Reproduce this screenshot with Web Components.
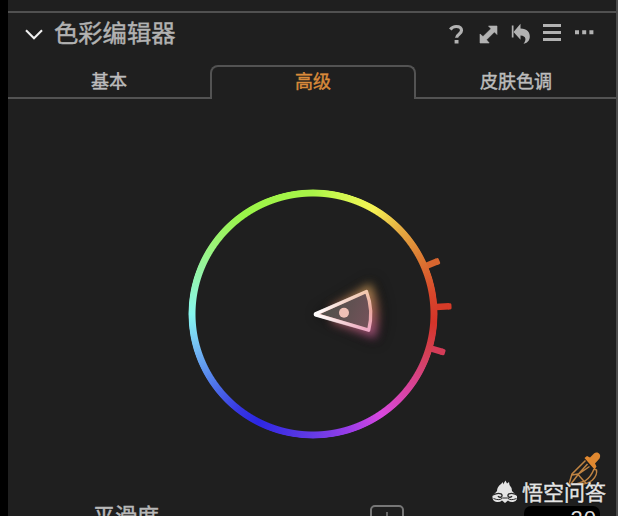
<!DOCTYPE html>
<html lang="zh-CN">
<head>
<meta charset="utf-8">
<title>色彩编辑器</title>
<style>
  html, body { margin: 0; height: 100%; background: #000; overflow: hidden; }
  body { font-family: "Liberation Sans", "Noto Sans CJK SC", sans-serif; -webkit-text-stroke: .45px currentColor; }
</style>
</head>
<body>
<color-editor>
  <tool-header slot="header">色彩编辑器</tool-header>
  <tab-strip slot="tabs">
    <tab-item>基本</tab-item>
    <tab-item active>高级</tab-item>
    <tab-item>皮肤色调</tab-item>
  </tab-strip>
  <color-wheel></color-wheel>
  <smooth-row slot="footer" value="20">平滑度</smooth-row>
  <site-mark slot="mark">悟空问答</site-mark>
</color-editor>

<script>
const define = (name, html, setup) => {
    const template = document.createElement('template');
    template.innerHTML = html;
    customElements.define(name, class extends HTMLElement {
        constructor() {
            super();
            this.attachShadow({mode: 'open'})
                .appendChild(template.content.cloneNode(true));
        }

        connectedCallback() {
            if (setup) setup(this, this.shadowRoot);
        }
    });
};

define('color-editor', `
  <style>
    :host { display: block; height: 516px; padding-left: 8px; box-sizing: border-box; overflow: hidden; position: relative; }
    .panel {
        height: 516px;
        box-sizing: border-box;
        background: #1f1f1f;
        border-right: 2px solid #4c4c4c;
        display: grid;
        grid-template-rows: 11px 54px 34px 1fr 36px;
    }
    .top { border-bottom: 2px solid #505050; box-sizing: content-box; height: 11px; }
    .mark { position: absolute; left: 491px; top: 478px; }
  </style>
  <div class="panel">
    <div class="top"></div>
    <slot name="header"></slot>
    <slot name="tabs"></slot>
    <slot></slot>
    <slot name="footer"></slot>
  </div>
  <div class="mark"><slot name="mark"></slot></div>
`);

define('tool-header', `
  <style>
    :host { display: flex; align-items: center; height: 46px; padding: 0 21px 0 16px; color: #b2b2b2; }
    .title { flex: 1; margin-left: 10px; padding-bottom: 1px; font-size: 24.3px; line-height: 36px; }
    svg { display: block; }
  </style>
  <svg width="20" height="46" viewBox="0 0 20 46" fill="none" stroke="#f0f0f0" stroke-width="2.1"><path d="M2 19.3l8 8 8-8"/></svg>
  <span class="title"><slot></slot></span>
  <svg width="150" height="46" viewBox="445 11 150 46" fill="#b2b2b2">
    <path d="M450.3 29.500c1.500-2 3.500-3 5.900-3 3.300 0 5.300 1.500 5.300 4 0 3.600-4.900 3.800-4.900 7.300" fill="none" stroke="#b2b2b2" stroke-width="3.200"/>
    <rect x="454.600" y="40" width="3.900" height="3.500"/>
    <path d="M488.500 26H497v8.500l-2.600-2.600-7.900 7.900 2.700 3.200H480v-9l3 2.600 8-7.900z" stroke="#b2b2b2" stroke-width=".6"/>
    <path d="M511.800 25.500h1.700v12h-1.700z"/>
    <path d="M513.500 32l7-8.200v4.700c6.700.2 9.500 4 9.300 8.400-.2 3.700-2.800 6.300-6.300 6.800 3-3.400 3-8-3-8.200v4.200z"/>
    <path d="M543 24h18v3h-18zM543 31h18v3h-18zM543 38h18v3h-18zM575 30.200h4v4h-4zM582.200 30.200h4v4h-4zM589.400 30.200h4v4h-4z"/>
  </svg>
`);

define('tab-strip', `
  <style>
    :host { display: grid; grid-template-columns: 202px 206px 1fr; height: 34px; }
  </style>
  <slot></slot>
`);

define('tab-item', `
  <style>
    :host {
        display: flex;
        justify-content: center;
        box-sizing: border-box;
        height: 34px;
        padding-top: 4px;
        border-bottom: 2px solid #535353;
        color: #bcbcbc;
        font-size: 18px;
        line-height: 26px;
    }
    :host([active]) {
        border: 2px solid #535353;
        border-bottom: 0;
        border-radius: 8px 8px 0 0;
        padding-top: 2px;
        color: #d98a3a;
    }
  </style>
  <slot></slot>
`);

define('color-wheel', `
  <style>
    :host { display: grid; place-content: start; padding: 75px 0 0 165px; }
    .wheel { display: grid; width: 280px; height: 280px; }
    .wheel > * { grid-area: 1 / 1; }
    .ring {
        width: 250px;
        height: 250px;
        margin: 15px;
        border-radius: 50%;
        background: conic-gradient(#a9f448 0deg, #d0f850 13deg, #f6f354 30deg, #e6af43 45deg, #dc7832 63deg, #d8472b 80deg, #d53429 94deg, #d44052 108deg, #d8439a 127deg, #d848df 146deg, #9a3de9 163deg, #653be4 180deg, #2c27e3 207deg, #3737e2 218deg, #5582ed 238deg, #78c5f5 256deg, #87f8ef 270deg, #93f5b6 286deg, #9bf476 305deg, #9af449 325deg, #a9f448 360deg);
        -webkit-mask: radial-gradient(circle, transparent 117px, #000 118px, #000 124px, transparent 125px);
        mask: radial-gradient(circle, transparent 117px, #000 118px, #000 124px, transparent 125px);
    }
    svg { display: block; overflow: visible; }
  </style>
  <div class="wheel">
    <div class="ring"></div>
    <svg width="280" height="280" viewBox="173 174 280 280">
      <defs>
        <linearGradient id="edge" gradientUnits="userSpaceOnUse" x1="350" y1="291" x2="352" y2="332">
          <stop stop-color="#f2cbb0"/><stop offset=".5" stop-color="#eba9a0"/><stop offset="1" stop-color="#efaac8"/>
        </linearGradient>
        <linearGradient id="tip" gradientUnits="userSpaceOnUse" x1="314" y1="314" x2="365" y2="314">
          <stop stop-color="#fff"/><stop offset=".2" stop-color="#fff" stop-opacity=".85"/><stop offset="1" stop-color="#fff" stop-opacity="0"/>
        </linearGradient>
        <linearGradient id="fill" gradientUnits="userSpaceOnUse" x1="335" y1="300" x2="373" y2="318">
          <stop stop-color="#54504c"/><stop offset="1" stop-color="#75525a"/>
        </linearGradient>
        <linearGradient id="glow" gradientUnits="userSpaceOnUse" x1="350" y1="288" x2="352" y2="335">
          <stop stop-color="#c79a58"/><stop offset=".5" stop-color="#bb705e"/><stop offset="1" stop-color="#b8588c"/>
        </linearGradient>
        <filter id="soft" x="-50%" y="-50%" width="200%" height="200%"><feGaussianBlur stdDeviation="5"/></filter>
        <filter id="shade" x="-50%" y="-50%" width="200%" height="200%"><feGaussianBlur stdDeviation="7"/></filter>
      </defs>
      <g fill="none" stroke-width="6.500">
        <path d="M426 266l11-4.600" stroke="#d8662f"/>
        <path d="M436 307l13-.7" stroke="#d63b28"/>
        <path d="M431 348.500l11.500 3.300" stroke="#d43c58"/>
      </g>
      <g fill="none" stroke-width="3" stroke-linejoin="round">
        <path d="M436.200 260l1.300 3.300 1.200-.5-1.400-3.200z" stroke="#d8662f"/>
        <path d="M448.500 304.800l.2 3.200 1.400-.1-.2-3.200z" stroke="#d63b28"/>
        <path d="M442.500 350.200l-1 3.200 1.600.4 1-3.200z" stroke="#d43c58"/>
      </g>
      <path d="M322 314l50-30q14 30 3 54z" fill="#000" stroke="#000" stroke-width="7" opacity=".45" filter="url(#shade)"/>
      <path d="M334 309l35-21q10 22 4 46l-38-14z" fill="url(#glow)" stroke="url(#glow)" stroke-width="7" opacity=".8" filter="url(#soft)"/>
      <path d="M315.500 314.300l51-22.800q7.200 19 2.200 38.700z" fill="url(#fill)" stroke="url(#edge)" stroke-width="3.300" stroke-linejoin="round"/>
      <path d="M368.700 330.200L315.500 314.800v-1l51-22.300" fill="none" stroke="url(#tip)" stroke-width="3.500" stroke-linejoin="round"/>
      <circle cx="344" cy="312.700" r="5" fill="#efc0b6"/>
    </svg>
  </div>
`);

define('smooth-row', `
  <style>
    :host { display: flex; height: 36px; padding-left: 85px; color: #b8b8b8; font-size: 22px; overflow: hidden; }
    .label { width: 277px; line-height: 32px; padding-top: 21px; }
    .box { width: 34px; height: 30px; box-sizing: border-box; border: 2px solid #777; border-radius: 5px; margin-top: 25px; display: flex; justify-content: center; }
    .box i { width: 1.500px; height: 18px; margin-top: 5px; background: #666; }
    .value { width: 76px; height: 30px; margin: 26px 0 0 120px; box-sizing: border-box; border-radius: 7px; background: #000; color: #ddd; text-align: right; padding: 0 3px 0 0; line-height: 25px; letter-spacing: 1px; -webkit-text-stroke: 0; }
  </style>
  <span class="label"><slot></slot></span>
  <span class="box"><i></i></span>
  <span class="value"></span>
`, (host, shadow) => {
    shadow.querySelector('.value').textContent = host.getAttribute('value');
});

define('site-mark', `
  <style>
    :host { display: flex; color: #e4e4e4; font-size: 21px; line-height: 30px; white-space: nowrap; }
    .face { flex: none; margin-right: 5px; }
    .dropper { position: absolute; left: 75px; top: -28px; }
    .text { position: relative; -webkit-text-stroke: .4px currentColor; text-shadow: 0 0 2px #000; }
  </style>
  <svg class="dropper" width="38" height="40" viewBox="566 450 38 40" fill="none" stroke="#c08443" stroke-width="1.500">
    <path d="M585.500 460.500l-13.500 13.500-3 10 2 1M587.500 464l-9 10-8 10.500M589.500 466.500l-11.500 8 8 9M594 469l2.500 1q1 5-4 10-6 5-14 4M594 469q-3 8-9 12l-9 3M578 474l-6 1"/>
    <path d="M584.500 458l2.500-2 3 1.500 4-4c3-2.500 8 .5 5.500 5l-4.500 5 1.500 3-2 3z" fill="#e08830" stroke="none"/>
  </svg>
  <svg class="face" width="26" height="28" viewBox="491 478 26 28" fill="#e4e4e4">
    <path d="M497 491q0-4 4-7l2-2v2.500l2.500-4 1.500 3 2-1.500.5 3q2.500 2.500 2.500 6l5 5q1 5-4 6-3 .3-5-1.500l-3 2.500-3-2.500q-2 1.800-5 1.500-5-1-4.500-6z"/>
    <path d="M493 495q4.500-2.500 8-1.200 2 1.700.3 3.200-2.300.8-3.300-.8M517 495q-4.500-2.500-8-1.200-2 1.700-.3 3.200 2.300.8 3.300-.8" fill="none" stroke="#292929" stroke-width="1.400"/>
    <path d="M493.500 498.500q6 2.500 9-.5h5q3 3 9 .5" fill="none" stroke="#292929" stroke-width="1"/>
  </svg>
  <span class="text"><slot></slot></span>
`);
</script>
</body>
</html>
